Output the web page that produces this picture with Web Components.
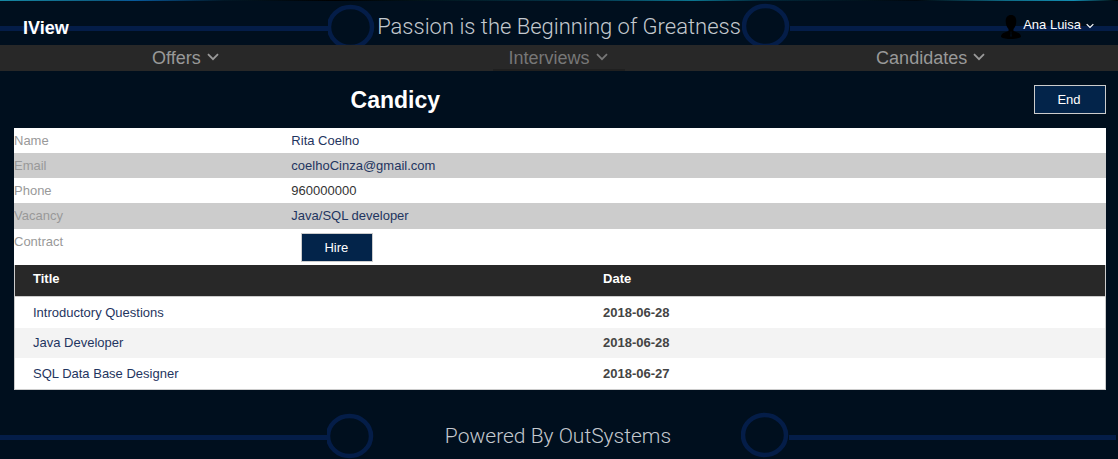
<!DOCTYPE html>
<html lang="en">
<head>
<meta charset="utf-8">
<title>IView - Candicy</title>
<style>
html { background: #000f1e; }
body { margin: 0; font: 13px/18px "Liberation Sans", Arial, sans-serif; color: #333; }
</style>
</head>
<body>
<iview-app></iview-app>
<script>
const define = (name, html) => customElements.define(name, class extends HTMLElement {
  constructor() {
    super();
    this.attachShadow({ mode: 'open' }).innerHTML = html;
  }
});

/* Circuit pattern: line, ring, caption, ring, line */
define('circuit-banner', `
<style>
:host { display: grid; grid-template-columns: minmax(0,1fr) 48px 366px 48px minmax(0,1fr); align-items: center; overflow: hidden; }
.line { height: 5px; background: #041d48; margin-top: 2px; }
svg { display: block; width: 48px; height: 48px; }
p { margin: 0; text-align: center; white-space: nowrap; font-family: Roboto, sans-serif; font-weight: 300; color: #c4c9ce; }
</style>
<div class="line"></div>
<svg viewBox="0 0 48 48" aria-hidden="true"><ellipse cx="22.500" cy="24" rx="21.5" ry="20" fill="none" stroke="#041d48" stroke-width="4.5"/></svg>
<p><slot></slot></p>
<svg viewBox="0 0 48 48" aria-hidden="true"><ellipse cx="23.500" cy="23" rx="21.5" ry="20" fill="none" stroke="#041d48" stroke-width="4.5"/></svg>
<div class="line"></div>`);

define('app-chevron', `
<style>:host { display: inline-block; } svg { display: block; width: 100%; height: 100%; }</style>
<svg viewBox="0 0 12 8" fill="none" stroke="currentColor" stroke-width="1.8" aria-hidden="true"><path d="M1 1.2 6 6.2 11 1.2"/></svg>`);

define('app-header', `
<style>
:host { display: grid; grid-template-columns: 1fr auto; align-items: center; height: 45px; position: relative; overflow: hidden; }
:host::before { content: ""; position: absolute; inset: 0 0 auto; height: 1px; background: linear-gradient(90deg,#1688a3,#0d5d83 9%,#075a9c 12%,#021726 20%,#000 30%,#04394f 53%,#0b7590 62%,#02283a 68%,#00070e 82%,#0e6b86 90%,#128eb3 96%,#000); }
circuit-banner { position: absolute; inset: 3px 0 auto; font-size: 22px; line-height: 28px; }
.brand { justify-self: start; margin-left: 23px; font-weight: bold; font-size: 18px; line-height: 22px; color: #fff; text-decoration: none; position: relative; padding-top: 10px; }
button { position: relative; display: flex; align-items: center; margin: 4px 24px 0 0; padding: 0; border: 0; background: none; font: inherit; color: #fff; }
svg { width: 20px; height: 24px; margin-right: 2px; margin-top: 4px; }
app-chevron { width: 8px; height: 6px; margin-left: 5px; margin-top: 2px; }
</style>
<circuit-banner>Passion is the Beginning of Greatness</circuit-banner>
<a class="brand" href="#">IView</a>
<button type="button"><svg viewBox="0 0 20 24" aria-hidden="true"><path d="M10 0C6.5 0 4.7 2.5 4.7 6.2c0 3.2 1.2 6 2.8 7.7v2L2.4 18C.8 18.8 0 20.300 0 22c2 1.400 6 2 10 2s8-.6 10-2c0-1.700-.8-3.200-2.400-4l-5.100-2.100v-2c1.600-1.700 2.800-4.500 2.800-7.700C15.300 2.500 13.500 0 10 0Z" fill="#000"/><path d="m9.400 17 .6-.8.6.8-.3 1 .5 3-.8 1-.8-1 .5-3Z" fill="#000f1e"/></svg>Ana Luisa<app-chevron></app-chevron></button>`);

define('app-nav', `
<style>
:host { display: block; background: #282828; }
nav { display: grid; grid-template-columns: repeat(3, 1fr); justify-items: center; }
a { display: flex; align-items: center; box-sizing: border-box; height: 26px; padding: 2px 17px 0 15px; border-bottom: 2px solid transparent; color: #999; text-decoration: none; font-size: 18px; line-height: 22px; }
a[aria-current] { color: #777; border-color: #202020; }
app-chevron { width: 12px; height: 8px; margin-left: 6px; margin-top: -3px; }
</style>
<nav>
<a href="#offers">Offers<app-chevron></app-chevron></a>
<a href="#interviews" aria-current="page">Interviews<app-chevron></app-chevron></a>
<a href="#candidates">Candidates<app-chevron></app-chevron></a>
</nav>`);

define('app-button', `
<style>
:host { display: block; }
button { display: block; width: 72px; height: 29px; padding: 0 2px 0 0; border: 1px solid #ccc; background: #03244a; color: #fff; font: inherit; }
</style>
<button type="button"><slot></slot></button>`);

define('detail-row', `
<style>
:host { display: grid; grid-template-columns: 25.4% 1fr; padding: 4px 0 3px; background: #fff; }
:host([shaded]) { background: #ccc; }
.label { color: #999; }
::slotted(a) { color: #1f3560; text-decoration: none; }
::slotted(app-button) { margin-left: 10px; }
</style>
<span class="label"><slot name="label"></slot></span><div><slot></slot></div>`);

define('interview-table', `
<style>
:host { display: block; }
table { width: 100%; border-collapse: separate; border-spacing: 0; border: 1px solid #ccc; border-top: 0; table-layout: fixed; background: #fff; }
th, td { padding: 0 18px; text-align: left; box-sizing: border-box; }
th { height: 32px; padding-bottom: 4px; background: #282828; color: #fff; border-bottom: 1px solid #ccc; }
th:first-child { width: 52.3%; }
td { height: 31px; }
tr:nth-child(2) td { height: 30px; background: #f3f3f3; }
td:last-child { font-weight: bold; color: #444; }
a { color: #1f3560; text-decoration: none; }
</style>
<table>
<thead><tr><th scope="col">Title</th><th scope="col">Date</th></tr></thead>
<tbody>
<tr><td><a href="#q1">Introductory Questions</a></td><td>2018-06-28</td></tr>
<tr><td><a href="#q2">Java Developer</a></td><td>2018-06-28</td></tr>
<tr><td><a href="#q3">SQL Data Base Designer</a></td><td>2018-06-27</td></tr>
</tbody>
</table>`);

define('iview-app', `
<style>
:host { display: block; }
main { padding: 0 12px 0 14px; }
.title { display: grid; grid-template-columns: 1fr auto; align-items: center; height: 57px; }
h1 { margin: 0; padding-left: 33%; font-size: 23px; line-height: 28px; color: #fff; }
footer { padding: 22px 2px 0 0; }
footer circuit-banner { font-size: 21px; line-height: 24px; height: 47px; }
.vacancy { padding-bottom: 4px; }
</style>
<app-header></app-header>
<app-nav></app-nav>
<main>
<div class="title"><h1>Candicy</h1><app-button>End</app-button></div>
<detail-row><span slot="label">Name</span><a href="#rita">Rita Coelho</a></detail-row>
<detail-row shaded><span slot="label">Email</span><a href="mailto:coelhoCinza@gmail.com">coelhoCinza@gmail.com</a></detail-row>
<detail-row><span slot="label">Phone</span>960000000</detail-row>
<detail-row shaded class="vacancy"><span slot="label">Vacancy</span><a href="#vacancy">Java/SQL developer</a></detail-row>
<detail-row><span slot="label">Contract</span><app-button>Hire</app-button></detail-row>
<interview-table></interview-table>
</main>
<footer><circuit-banner>Powered By OutSystems</circuit-banner></footer>`);
</script>
</body>
</html>
